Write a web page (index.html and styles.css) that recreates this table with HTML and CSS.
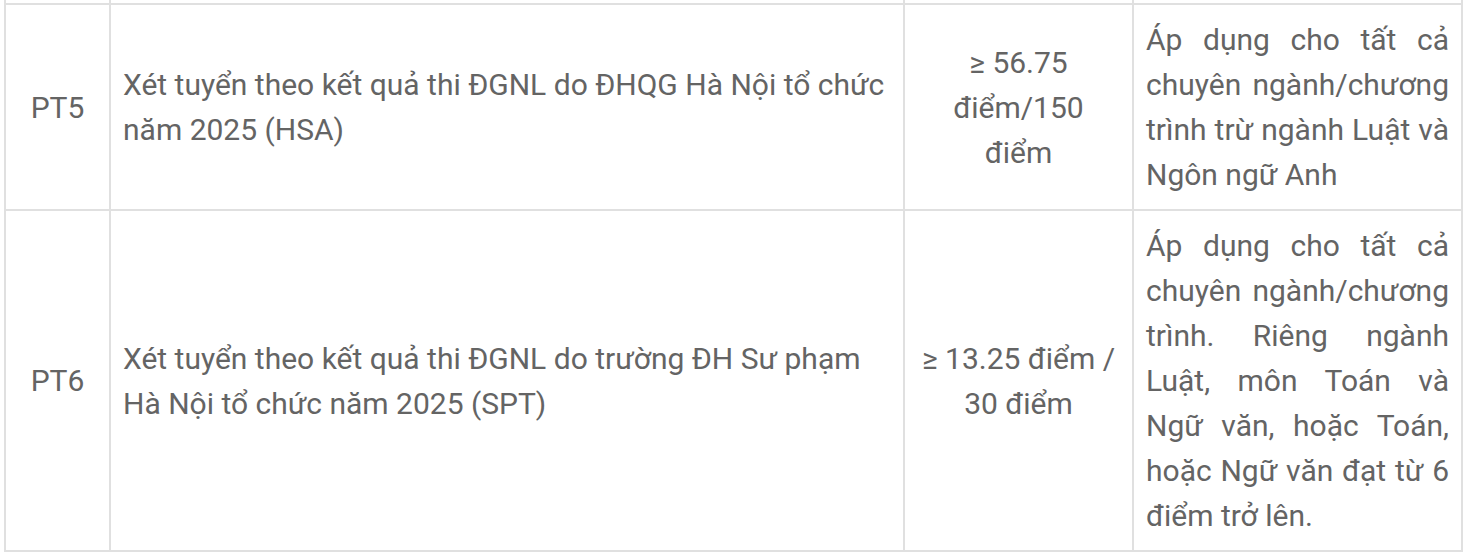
FILE: index.html
```html
<!DOCTYPE html>
<html lang="vi">
<head>
<meta charset="utf-8">
<title>Phương thức xét tuyển</title>
<link rel="stylesheet" href="styles.css">
</head>
<body>
<div class="wrap">
<table class="tbl">
  <colgroup>
    <col class="c-code">
    <col class="c-desc">
    <col class="c-score">
    <col class="c-note">
  </colgroup>
  <tbody>
    <tr class="cut">
      <td></td><td></td><td></td><td></td>
    </tr>
    <tr>
      <td class="code">PT5</td>
      <td class="desc">Xét tuyển theo kết quả thi ĐGNL do ĐHQG Hà Nội tổ chức năm 2025 (HSA)</td>
      <td class="score">≥ 56.75 điểm/150 điểm</td>
      <td class="note">Áp dụng cho tất cả chuyên ngành/chương trình trừ ngành Luật và Ngôn ngữ Anh</td>
    </tr>
    <tr>
      <td class="code">PT6</td>
      <td class="desc">Xét tuyển theo kết quả thi ĐGNL do trường ĐH Sư phạm Hà Nội tổ chức năm 2025 (SPT)</td>
      <td class="score">≥ 13.25 điểm / 30 điểm</td>
      <td class="note">Áp dụng cho tất cả chuyên ngành/chương trình. Riêng ngành Luật, môn Toán và Ngữ văn, hoặc Toán, hoặc Ngữ văn đạt từ 6 điểm trở lên.</td>
    </tr>
  </tbody>
</table>
</div>
</body>
</html>
```
FILE: styles.css
```css
html, body {
  margin: 0;
  padding: 0;
  background: #ffffff;
}
.wrap {
  padding-left: 4px;
  overflow: hidden;
  height: 558px;
}
.tbl {
  border-collapse: collapse;
  table-layout: fixed;
  width: 1459px;
  font-family: Roboto, "Noto Sans", sans-serif;
  font-size: 30px;
  line-height: 45px;
  color: #646464;
}
.c-code { width: 105px; }
.c-desc { width: 794px; }
.c-score { width: 229px; }
.c-note { width: 329px; }
.tbl td {
  border: 2px solid #e0e0e0;
  padding: 12px;
  vertical-align: middle;
}
.tbl tr.cut td {
  border-top: none;
  padding: 0;
  height: 3px;
}
.code, .score { text-align: center; }
.desc { text-align: left; }
.note { text-align: justify; }
```
